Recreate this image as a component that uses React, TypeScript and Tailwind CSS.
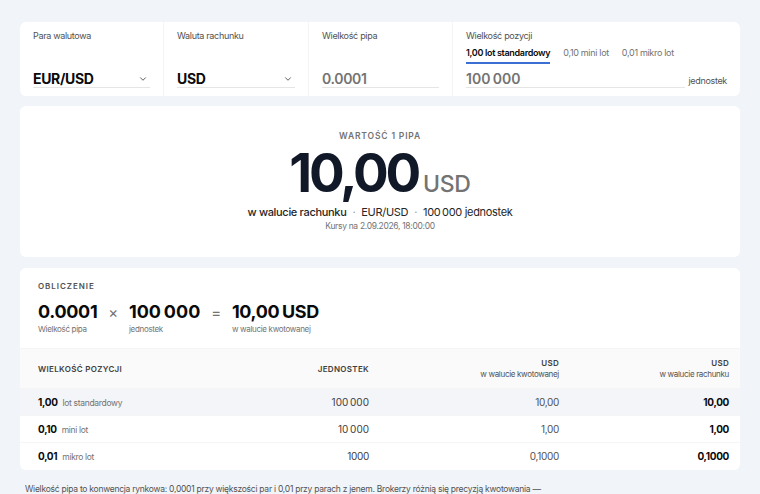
import { ChevronDown } from 'lucide-react';

const font = { fontFamily: 'Inter, "Noto Sans", sans-serif' };

// narrow no-break space used as thousands separator
const sp = '\u202f';

const rows = [
  { lots: '1,00', name: 'lot standardowy', units: `100${sp}000`, quote: '10,00', acct: '10,00', active: true },
  { lots: '0,10', name: 'mini lot', units: `10${sp}000`, quote: '1,00', acct: '1,00', active: false },
  { lots: '0,01', name: 'mikro lot', units: '1000', quote: '0,1000', acct: '0,1000', active: false },
];

function Field({ label, value, select }: { label: string; value: string; select?: boolean }) {
  return (
    <div className="flex h-full flex-col justify-between border-r border-neutral-100 px-[13px] pb-[8px] pt-[8px]">
      <div className="text-[9px] leading-[12px] text-neutral-600">{label}</div>
      <div className="flex h-[20px] items-center justify-between border-b border-neutral-200 pt-[2px]">
        <span className={select ? 'text-[14px] font-bold text-neutral-950' : 'text-[14px] font-semibold text-neutral-500'}>
          {value}
        </span>
        {select && <ChevronDown size={10} strokeWidth={2} className="mr-[2px] text-neutral-700" />}
      </div>
    </div>
  );
}

export default function App() {
  return (
    <div className="min-h-[494px] w-[760px] overflow-hidden bg-[#f1f4f8] px-5 pt-[22px] tracking-[-0.02em]" style={font}>
      {/* inputs */}
      <div className="grid h-[74px] grid-cols-[144px_145px_144px_1fr] rounded-md bg-white">
        <Field label="Para walutowa" value="EUR/USD" select />
        <Field label="Waluta rachunku" value="USD" select />
        <Field label="Wielkość pipa" value="0.0001" />
        <div className="flex h-full flex-col px-[13px] pb-[8px] pt-[8px]">
          <div className="text-[9px] leading-[12px] text-neutral-600">Wielkość pozycji</div>
          <div className="mt-[4px] flex gap-[13px] text-[9px] leading-[14px]">
            <span className="border-b-2 border-[#3b6fd4] pb-[2px] font-semibold text-neutral-950">1,00 lot standardowy</span>
            <span className="text-neutral-500">0,10 mini lot</span>
            <span className="text-neutral-500">0,01 mikro lot</span>
          </div>
          <div className="mt-auto flex items-end gap-[3px]">
            <div className="flex h-[20px] flex-1 items-center border-b border-neutral-200 pt-[2px] text-[14px] font-semibold text-neutral-500">
              100{sp}000
            </div>
            <span className="pb-[1px] text-[9px] text-neutral-600">jednostek</span>
          </div>
        </div>
      </div>

      {/* result */}
      <div className="mt-[10px] flex h-[151px] flex-col items-center rounded-md bg-white pt-[24px]">
        <div className="text-[8.5px] font-semibold tracking-[0.1em] text-neutral-500">WARTOŚĆ 1 PIPA</div>
        <div className="mt-[4px] flex items-baseline gap-[5px] leading-none">
          <span className="text-[53px] font-bold tracking-[-0.06em] text-[#111827]">10,00</span>
          <span className="text-[23px] font-medium text-neutral-500">USD</span>
        </div>
        <div className="mt-[4px] flex items-center gap-[6px] text-[11px] text-neutral-800">
          <span className="font-medium">w walucie rachunku</span>
          <span className="text-neutral-400">·</span>
          <span>EUR/USD</span>
          <span className="text-neutral-400">·</span>
          <span>100{sp}000 jednostek</span>
        </div>
        <div className="text-[8.5px] text-neutral-500">Kursy na 2.09.2026, 18:00:00</div>
      </div>

      {/* calculation */}
      <div className="mt-[11px] overflow-hidden rounded-md bg-white">
        <div className="px-[18px] pb-[13px] pt-[12px]">
          <div className="text-[8px] font-semibold tracking-[0.12em] text-neutral-600">OBLICZENIE</div>
          <div className="mt-[10px] flex items-start gap-[11px]">
            <div>
              <div className="text-[18px] font-bold leading-[20px] text-neutral-950">0.0001</div>
              <div className="mt-[1px] text-[8px] text-neutral-500">Wielkość pipa</div>
            </div>
            <div className="text-[15px] leading-[22px] text-neutral-500">×</div>
            <div>
              <div className="text-[18px] font-bold leading-[20px] text-neutral-950">100{sp}000</div>
              <div className="mt-[1px] text-[8px] text-neutral-500">jednostek</div>
            </div>
            <div className="text-[15px] leading-[22px] text-neutral-500">=</div>
            <div>
              <div className="text-[18px] font-bold leading-[20px] text-neutral-950">10,00{sp}USD</div>
              <div className="mt-[1px] text-[8px] text-neutral-500">w walucie kwotowanej</div>
            </div>
          </div>
        </div>

        <div className="grid h-[41px] grid-cols-[200px_160px_190px_1fr] items-center border-y border-neutral-100 bg-[#fafafa] text-[8px]">
          <div className="pl-[18px] font-semibold tracking-[0.04em] text-neutral-700">WIELKOŚĆ POZYCJI</div>
          <div className="pr-[11px] text-right font-semibold tracking-[0.04em] text-neutral-700">JEDNOSTEK</div>
          <div className="pr-[11px] text-right leading-[11px]">
            <div className="font-semibold tracking-[0.04em] text-neutral-700">USD</div>
            <div className="text-neutral-600">w walucie kwotowanej</div>
          </div>
          <div className="pr-[11px] text-right leading-[11px]">
            <div className="font-semibold tracking-[0.04em] text-neutral-700">USD</div>
            <div className="text-neutral-600">w walucie rachunku</div>
          </div>
        </div>

        {rows.map((r, i) => (
          <div
            key={r.lots}
            className={
              'grid h-[27px] grid-cols-[200px_160px_190px_1fr] items-center text-[10px] ' +
              (r.active ? 'bg-[#f3f5f8] ' : '') +
              (i < rows.length - 1 ? 'border-b border-neutral-100' : '')
            }
          >
            <div className="flex items-baseline gap-[5px] pl-[18px]">
              <span className="font-bold text-neutral-950">{r.lots}</span>
              <span className="text-[8.5px] text-neutral-500">{r.name}</span>
            </div>
            <div className="pr-[11px] text-right text-neutral-700">{r.units}</div>
            <div className="pr-[11px] text-right text-neutral-600">{r.quote}</div>
            <div className="pr-[11px] text-right font-bold text-neutral-950">{r.acct}</div>
          </div>
        ))}
      </div>

      <p className="mt-[13px] whitespace-nowrap pl-[5px] text-[8.5px] tracking-[-0.03em] text-neutral-600">
        Wielkość pipa to konwencja rynkowa: 0,0001 przy większości par i 0,01 przy parach z jenem. Brokerzy różnią się precyzją kwotowania —
      </p>
    </div>
  );
}
